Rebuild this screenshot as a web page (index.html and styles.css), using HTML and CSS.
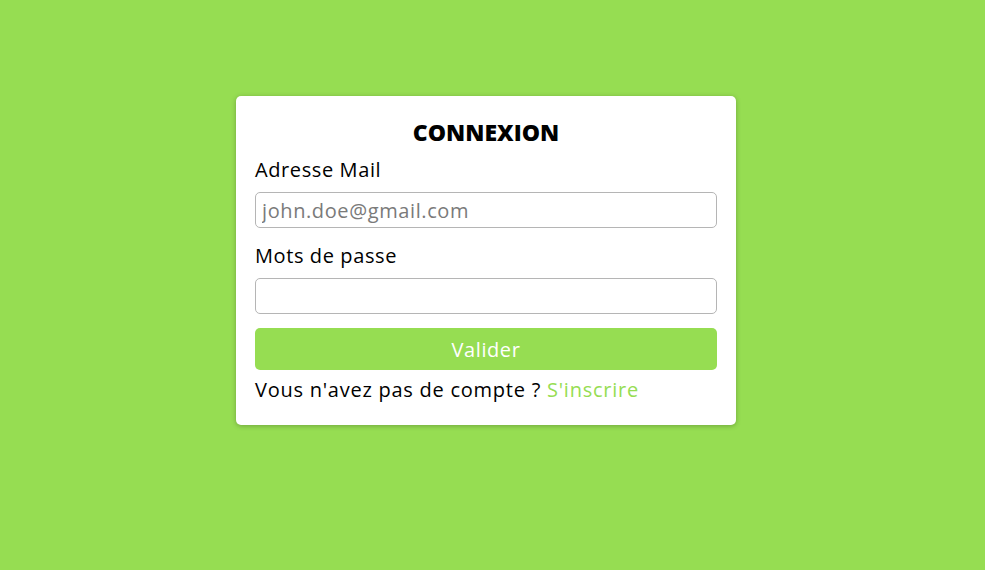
FILE: index.html
```html
<!DOCTYPE html>
<html lang="fr">
<head>
<meta charset="utf-8">
<title>Connexion</title>
<link rel="stylesheet" href="styles.css">
</head>
<body>
<main class="page">
  <form class="card">
    <h1 class="title">CONNEXION</h1>
    <label class="label" for="mail">Adresse Mail</label>
    <input class="field" id="mail" type="email" placeholder="john.doe@gmail.com">
    <label class="label" for="pass">Mots de passe</label>
    <input class="field" id="pass" type="password">
    <button class="submit" type="button">Valider</button>
    <p class="footer">Vous n'avez pas de compte ? <a class="link" href="#">S'inscrire</a></p>
  </form>
</main>
</body>
</html>
```

FILE: styles.css
```css
html, body {
  margin: 0;
  padding: 0;
  height: 100%;
  background: #96dd52;
}
body {
  font-family: "Open Sans", "DejaVu Sans", sans-serif;
  color: #000;
}
.page {
  display: flex;
  justify-content: flex-start;
  align-items: flex-start;
  padding: 96px 0 0 236px;
}
.card {
  box-sizing: border-box;
  width: 500px;
  height: 329px;
  background: #fff;
  border-radius: 5px;
  box-shadow: 0 1px 5px rgba(0, 0, 0, 0.25);
  padding: 18px 19px 0;
  display: flex;
  flex-direction: column;
}
.title {
  margin: 0 0 6px;
  text-align: center;
  font-size: 23px;
  font-weight: 800;
  line-height: 36px;
}
.label {
  font-size: 20px;
  line-height: 28px;
  letter-spacing: 0.6px;
  margin-bottom: 8px;
}
.field {
  box-sizing: border-box;
  height: 36px;
  border: 1px solid #b5b5b5;
  border-radius: 5px;
  padding: 0 6px;
  font-family: inherit;
  font-size: 20px;
  letter-spacing: 0.6px;
  margin-bottom: 14px;
}
.field::placeholder {
  color: #7a7a7a;
}
.submit {
  height: 42px;
  border: 0;
  border-radius: 5px;
  background: #96dd52;
  color: #fff;
  font-family: inherit;
  font-size: 20px;
  letter-spacing: 0.6px;
}
.footer {
  margin: 6px 0 0;
  font-size: 20px;
  line-height: 27px;
  letter-spacing: 0.75px;
}
.link {
  color: #96dd52;
  text-decoration: none;
}
```
